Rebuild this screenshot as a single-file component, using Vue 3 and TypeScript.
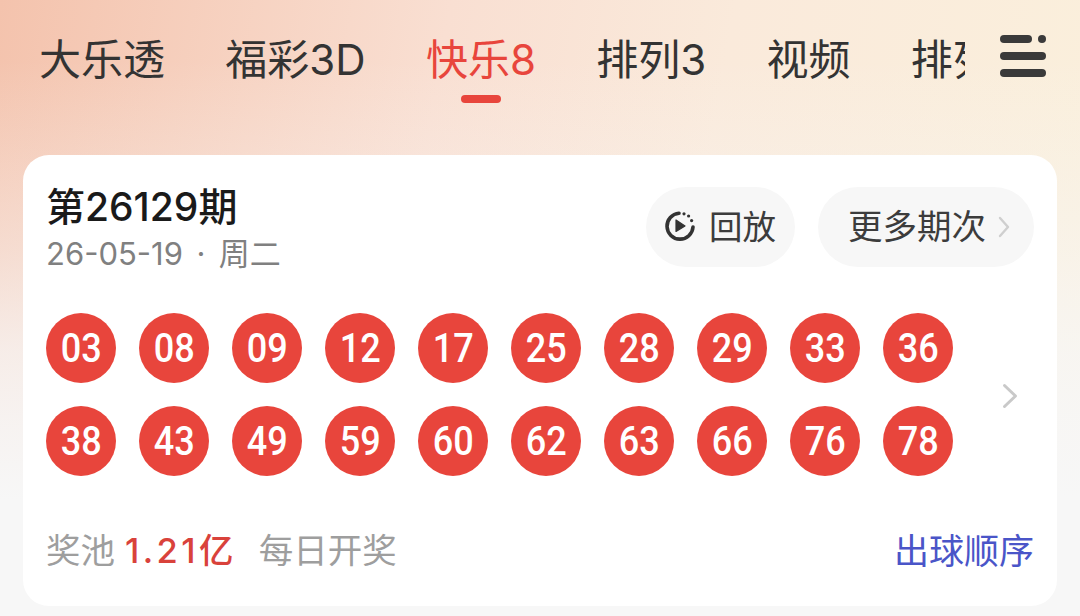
<script setup lang="ts">
const tabs = ['大乐透', '福彩3D', '快乐8', '排列3', '视频', '排列5']
const activeTab = '快乐8'
const rows = [
  ['03', '08', '09', '12', '17', '25', '28', '29', '33', '36'],
  ['38', '43', '49', '59', '60', '62', '63', '66', '76', '78'],
]
</script>

<template>
  <div class="page">
    <header class="header">
      <nav class="tabs">
        <div v-for="tab in tabs" :key="tab" class="tab" :class="{ active: tab === activeTab }">{{ tab }}</div>
      </nav>
      <svg class="menu" width="46" height="42" viewBox="0 0 46 42">
        <rect x="0" y="0" width="32" height="8" rx="4" fill="#3a3a3a" />
        <circle cx="42" cy="4" r="4" fill="#3a3a3a" />
        <rect x="0" y="17" width="46" height="8" rx="4" fill="#3a3a3a" />
        <rect x="0" y="34" width="46" height="8" rx="4" fill="#3a3a3a" />
      </svg>
    </header>

    <section class="card">
      <div class="card-top">
        <div class="issue">
          <div class="issue-title">第26129期</div>
          <div class="issue-date">
            <span>26-05-19</span>
            <span>·</span>
            <span>周二</span>
          </div>
        </div>
        <div class="actions">
          <div class="pill replay">
            <svg width="32" height="32" viewBox="0 0 32 32">
              <path d="M15 2.2A13 13 0 1 0 29 16" fill="none" stroke="#333" stroke-width="3.6" stroke-linecap="round" />
              <path d="M12 9v11.5l9-5.6z" fill="#333" stroke="#333" stroke-width="1.2" stroke-linejoin="round" />
              <circle cx="20" cy="2.8" r="1.6" fill="#333" />
              <circle cx="24.6" cy="5" r="1.6" fill="#333" />
              <circle cx="27.6" cy="9.6" r="1.6" fill="#333" />
            </svg>
            <span>回放</span>
          </div>
          <div class="pill more">
            <span>更多期次</span>
            <svg width="12" height="22" viewBox="0 0 12 22">
              <path d="M2 2l8 9-8 9" fill="none" stroke="#cfcfcf" stroke-width="2.4" stroke-linecap="round" stroke-linejoin="round" />
            </svg>
          </div>
        </div>
      </div>

      <div class="draw">
        <div class="balls">
          <div v-for="(row, i) in rows" :key="i" class="ball-row">
            <div v-for="n in row" :key="n" class="ball"><span>{{ n }}</span></div>
          </div>
        </div>
        <svg class="draw-arrow" width="16" height="26" viewBox="0 0 16 26">
          <path d="M2.5 2.5l11 10.5-11 10.5" fill="none" stroke="#c9c9c9" stroke-width="3" stroke-linecap="round" stroke-linejoin="round" />
        </svg>
      </div>

      <div class="card-foot">
        <div class="pool">
          <span>奖池</span>
          <span class="amount">1.21亿</span>
          <span class="daily">每日开奖</span>
        </div>
        <div class="order">出球顺序</div>
      </div>
    </section>
  </div>
</template>

<style scoped>
.page {
  width: 1080px;
  height: 616px;
  overflow: hidden;
  box-sizing: border-box;
  padding-top: 35px;
  font-family: Inter, "Noto Sans CJK SC", sans-serif;
  background:
    linear-gradient(180deg,
      rgba(247, 247, 247, 0) 60px,
      rgba(247, 247, 247, 0.2) 150px,
      rgba(247, 247, 247, 0.45) 250px,
      rgba(247, 247, 247, 0.78) 350px,
      rgba(247, 247, 247, 0.9) 420px,
      #f7f7f7 500px),
    linear-gradient(100deg, #f4c3ad 0%, #f9dfd2 38%, #faeadb 62%, #faf0dc 100%);
}

.header {
  display: flex;
  align-items: flex-start;
  height: 120px;
  box-sizing: border-box;
  padding-left: 39px;
}

.tabs {
  display: flex;
  gap: 60.3px;
  width: 926px;
  overflow: hidden;
  flex-shrink: 0;
}

.tab {
  position: relative;
  flex-shrink: 0;
  height: 68px;
  font-size: 42px;
  line-height: 50px;
  color: #333;
  white-space: nowrap;
}

.tab.active {
  color: #e8453c;
}

.tab.active::after {
  content: '';
  position: absolute;
  left: 50%;
  bottom: 0;
  width: 40px;
  height: 8px;
  margin-left: -20px;
  border-radius: 4px;
  background: #e8453c;
}

.menu {
  margin-left: 35px;
}

.card {
  width: 1034px;
  height: 451px;
  margin-left: 23px;
  box-sizing: border-box;
  padding: 32px 23px 0;
  border-radius: 26px;
  background: #fff;
}

.card-top {
  display: flex;
  justify-content: space-between;
}

.issue-title {
  font-size: 39px;
  line-height: 40px;
  font-weight: 500;
  color: #1a1a1a;
}

.issue-date {
  display: flex;
  gap: 13.5px;
  margin-top: 7px;
  font-size: 31px;
  line-height: 40px;
  color: #808080;
}

.actions {
  display: flex;
  gap: 23px;
}

.pill {
  display: flex;
  align-items: center;
  height: 80px;
  border-radius: 40px;
  background: #f7f7f7;
  font-size: 34.5px;
  line-height: 78px;
  color: #3c3c3c;
}

.replay {
  gap: 13px;
  width: 149px;
  padding-left: 18px;
  box-sizing: border-box;
  font-size: 33.5px;
}

.more {
  gap: 12px;
  width: 216px;
  padding-left: 30px;
  box-sizing: border-box;
}

.draw {
  position: relative;
  display: flex;
  margin-top: 39px;
}

.balls {
  display: flex;
  flex-direction: column;
  gap: 23px;
}

.ball-row {
  display: flex;
  gap: 23px;
}

.ball {
  display: flex;
  align-items: center;
  justify-content: center;
  width: 70px;
  height: 70px;
  border-radius: 50%;
  background: #e8453c;
  color: #fff;
  font-family: Roboto, sans-serif;
  font-size: 41px;
  font-weight: 500;
}

.ball span {
  display: inline-block;
  transform: scaleX(0.88);
}

.draw-arrow {
  margin: 70px 0 0 49px;
}

.card-foot {
  display: flex;
  justify-content: space-between;
  align-items: center;
  margin-top: 53px;
  font-size: 35px;
  line-height: 44px;
}

.pool {
  display: flex;
  gap: 10px;
  font-size: 34.5px;
  color: #9e9e9e;
}

.amount {
  color: #d9423b;
  font-weight: 500;
  letter-spacing: 3.4px;
}

.daily {
  margin-left: 12px;
}

.order {
  color: #4a55c8;
}
</style>

<style>
html, body {
  margin: 0;
  background: #f7f7f7;
}
</style>
